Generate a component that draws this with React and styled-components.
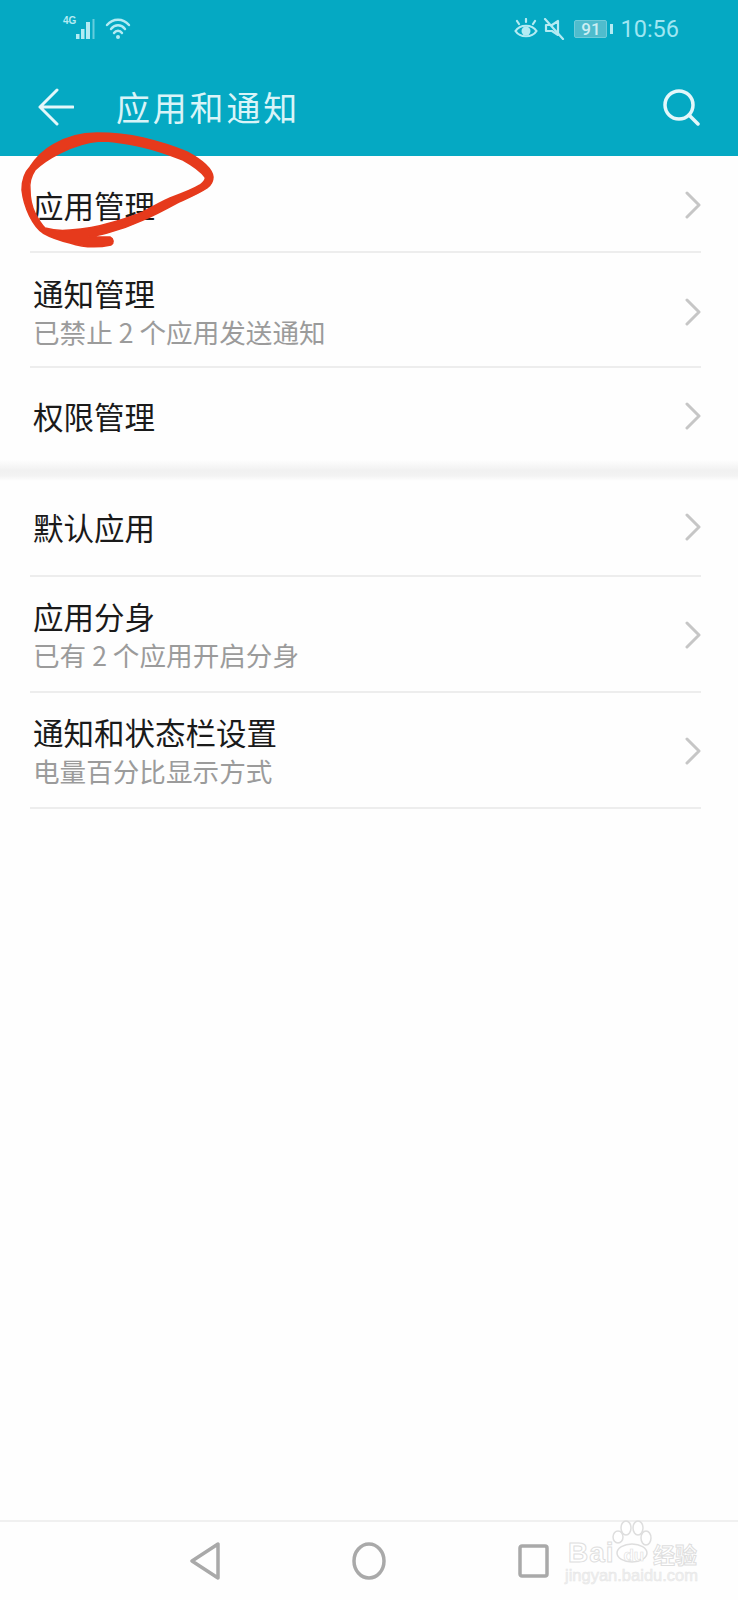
import styled, { createGlobalStyle } from 'styled-components';

const GlobalStyle = createGlobalStyle`
  html, body {
    margin: 0;
    padding: 0;
    background: #fefefe;
  }
`;

const Page = styled.div`
  position: relative;
  display: flex;
  flex-direction: column;
  width: 738px;
  height: 1600px;
  overflow: hidden;
  background: #fefefe;
  font-family: "Noto Sans CJK SC", "Noto Sans", sans-serif;
`;

const Header = styled.header`
  display: flex;
  flex-direction: column;
  background: #05a9c3;
`;

const StatusBar = styled.div`
  display: flex;
  align-items: center;
  justify-content: space-between;
  height: 58px;
  padding: 0 59px 0 63px;
  color: #b4ebf3;
`;

const StatusGroup = styled.div`
  display: flex;
  align-items: center;
`;

const NetworkLabel = styled.span`
  align-self: flex-start;
  margin-top: -2px;
  font-family: "Liberation Sans", sans-serif;
  font-size: 10px;
  font-weight: 700;
  line-height: 10px;
  width: 13px;
`;

const Battery = styled.div`
  display: flex;
  align-items: center;
  justify-content: center;
  width: 33px;
  height: 18px;
  margin-left: 9px;
  box-sizing: border-box;
  border: 1px solid #6fcbd9;
  border-radius: 2px;
  background: #4fbccd;
  color: #cdeef3;
  font-family: "Roboto", sans-serif;
  font-size: 17px;
  font-weight: 500;
  line-height: 16px;
`;

const BatteryTip = styled.div`
  width: 3px;
  height: 10px;
  margin: 0 7px 0 3px;
  background: #b4ebf3;
`;

const Clock = styled.span`
  color: #9fe6f2;
  font-family: "Roboto", sans-serif;
  font-size: 23.5px;
  line-height: 28px;
`;

const Toolbar = styled.div`
  display: flex;
  align-items: center;
  height: 98px;
  padding: 0 38px;
  color: #e4f7fa;
`;

const ToolbarTitle = styled.h1`
  flex: 1;
  margin: 0 0 0 42px;
  color: #d9f4f8;
  font-size: 34px;
  font-weight: 400;
  letter-spacing: 2.8px;
  line-height: 44px;
`;

const List = styled.div`
  display: flex;
  flex-direction: column;
`;

const Row = styled.div`
  display: flex;
  align-items: center;
  justify-content: space-between;
  box-sizing: border-box;
  height: ${(props) => props.$height}px;
  margin: 0 37px 0 30px;
  padding: ${(props) => Math.max(props.$shift, 0)}px 0 ${(props) => Math.max(-props.$shift, 0)}px 3px;
  border-bottom: ${(props) => (props.$plain ? 'none' : '2px solid #ededed')};
`;

const RowText = styled.div`
  display: flex;
  flex-direction: column;
`;

const RowTitle = styled.div`
  color: #1a1a1a;
  font-size: 30.5px;
  line-height: 40px;
`;

const RowSubtitle = styled.div`
  color: #9b9b9b;
  font-size: 26.6px;
  line-height: 38px;
`;

const Chevron = styled.svg`
  flex: none;
  width: 16px;
  height: 28px;
  color: #c6c6c6;
`;

const SectionGap = styled.div`
  height: 21px;
  background: linear-gradient(to bottom, #fefefe 0%, #f1f1f1 50%, #f3f3f3 75%, #fefefe 100%);
`;

const NavBar = styled.nav`
  display: flex;
  align-items: center;
  gap: 132px;
  box-sizing: border-box;
  height: 80px;
  margin-top: auto;
  padding: 0 0 0 190px;
  border-top: 2px solid #f0f0f0;
  color: #a9a9a9;
`;

const ScribbleMark = styled.svg`
  position: absolute;
  top: 125px;
  left: 15px;
  width: 210px;
  height: 130px;
`;

const Watermark = styled.div`
  position: absolute;
  top: 1519px;
  left: 565px;
  display: flex;
  flex-direction: column;
  width: 136px;
  color: #ffffff;
  font-family: "Liberation Sans", sans-serif;
`;

const WatermarkPaw = styled.svg`
  width: 50px;
  height: 44px;
  margin-left: 46px;
`;

const WatermarkBrand = styled.div`
  position: absolute;
  top: 22px;
  left: 3px;
  display: flex;
  align-items: center;
  justify-content: space-between;
  width: 129px;
  height: 24px;
  -webkit-text-stroke: 1px #dedede;
`;

const WatermarkLatin = styled.span`
  font-size: 28px;
  font-weight: 700;
  letter-spacing: 1px;
  line-height: 24px;
`;

const WatermarkDu = styled.span`
  margin-top: 6px;
  font-size: 17px;
  font-weight: 700;
  line-height: 18px;
  -webkit-text-stroke: 0.6px #dedede;
`;

const WatermarkCjk = styled.span`
  font-family: "Noto Sans CJK SC", sans-serif;
  font-size: 22px;
  font-weight: 700;
  line-height: 24px;
`;

const WatermarkUrl = styled.div`
  margin-top: 2px;
  color: #f0f0f0;
  font-size: 16.5px;
  line-height: 20px;
  white-space: nowrap;
  -webkit-text-stroke: 0.5px #e6e6e6;
`;

const rows = [
  { title: '应用管理', height: 97, shift: 2 },
  { title: '通知管理', subtitle: '已禁止 2 个应用发送通知', height: 115, shift: 4 },
  { title: '权限管理', height: 92, shift: 4, plain: true },
];

const moreRows = [
  { title: '默认应用', height: 96, shift: -2 },
  { title: '应用分身', subtitle: '已有 2 个应用开启分身', height: 116, shift: 2 },
  { title: '通知和状态栏设置', subtitle: '电量百分比显示方式', height: 116, shift: 2 },
];

const SettingRow = ({ title, subtitle, height, shift, plain }) => (
  <Row $height={height} $shift={shift} $plain={plain}>
    <RowText>
      <RowTitle>{title}</RowTitle>
      {subtitle && <RowSubtitle>{subtitle}</RowSubtitle>}
    </RowText>
    <Chevron viewBox="0 0 16 28" fill="none" stroke="currentColor" strokeWidth="3" strokeLinecap="round" strokeLinejoin="round">
      <path d="M2 2 L14 14 L2 26" />
    </Chevron>
  </Row>
);

const App = () => (
  <Page>
    <GlobalStyle />
    <Header>
      <StatusBar>
        <StatusGroup>
          <NetworkLabel>4G</NetworkLabel>
          <svg width="21" height="22" viewBox="0 0 21 22" fill="currentColor">
            <rect x="0" y="16" width="3.5" height="5" />
            <rect x="5" y="11" width="3.5" height="10" />
            <rect x="10" y="4" width="4" height="17" />
            <rect x="16.5" y="1" width="2" height="20" opacity="0.55" />
          </svg>
          <svg width="26" height="22" viewBox="0 0 26 22" fill="none" stroke="currentColor" strokeWidth="2.4" strokeLinecap="round" style={{ marginLeft: 8 }}>
            <path d="M2 7 C8 0 18 0 24 7" />
            <path d="M6 11 C10 6 16 6 20 11" />
            <path d="M9 15 C11 12 15 12 17 15" />
            <circle cx="13" cy="19" r="2" fill="currentColor" stroke="none" />
          </svg>
        </StatusGroup>
        <StatusGroup>
          <svg width="24" height="22" viewBox="0 0 24 22" fill="none" stroke="currentColor" strokeWidth="2.2" strokeLinecap="round">
            <path d="M1.5 13 C6 6 18 6 22.5 13 C18 20 6 20 1.5 13 Z" />
            <circle cx="12" cy="13" r="4.5" fill="currentColor" stroke="none" />
            <path d="M5 6 L3 3 M12 4 L12 1 M19 6 L21 3" />
          </svg>
          <svg width="22" height="22" viewBox="0 0 22 22" fill="none" stroke="currentColor" strokeWidth="2.2" strokeLinecap="round" strokeLinejoin="round" style={{ marginLeft: 5 }}>
            <path d="M15 3 L15 17 L9 13 L3 13 L3 7 L9 7 Z" />
            <path d="M2 1 L20 21" />
          </svg>
          <Battery>91</Battery>
          <BatteryTip />
          <Clock>10:56</Clock>
        </StatusGroup>
      </StatusBar>
      <Toolbar>
        <svg width="36" height="38" viewBox="0 0 36 38" fill="none" stroke="currentColor" strokeWidth="3" strokeLinecap="round" strokeLinejoin="round">
          <path d="M35 19 L2 19 M19 2 L2 19 L19 36" />
        </svg>
        <ToolbarTitle>应用和通知</ToolbarTitle>
        <svg width="37" height="37" viewBox="0 0 37 37" fill="none" stroke="currentColor" strokeWidth="3.5" strokeLinecap="round">
          <circle cx="16" cy="16" r="14" />
          <path d="M26 26 L35 35" />
        </svg>
      </Toolbar>
    </Header>
    <List>
      {rows.map((row) => (
        <SettingRow key={row.title} {...row} />
      ))}
    </List>
    <SectionGap />
    <List>
      {moreRows.map((row) => (
        <SettingRow key={row.title} {...row} />
      ))}
    </List>
    <NavBar>
      <svg width="30" height="38" viewBox="0 0 30 38" fill="none" stroke="currentColor" strokeWidth="3.5" strokeLinejoin="round">
        <path d="M28 2 L28 36 L2 19 Z" />
      </svg>
      <svg width="34" height="38" viewBox="0 0 34 38" fill="none" stroke="currentColor" strokeWidth="3.5">
        <ellipse cx="17" cy="19" rx="15" ry="17" />
      </svg>
      <svg width="31" height="34" viewBox="0 0 31 34" fill="none" stroke="currentColor" strokeWidth="3.5" strokeLinejoin="round">
        <rect x="2" y="2" width="27" height="30" rx="2" />
      </svg>
    </NavBar>
    <ScribbleMark viewBox="15 125 210 130">
      <path
        fill="#e63a1c"
        stroke="#e63a1c"
        strokeWidth="1.5"
        fillRule="evenodd"
        d="M110 237 C114 239 114 243 111 245 C97 248 82 247 70 243 C58 240 50 237 43 233 C33 226 24 208 22 190 C22 178 26 171 30 167 C36 158 44 150 53 145 C66 137 82 133 97 133 C115 133 130 135 143 138 C160 142 175 147 187 152 C200 159 212 168 213 177 C213 182 211 185 207 188 C198 194 188 198 177 203 C166 209 155 215 143 220 C130 226 118 230 107 233 C100 235 94 236 88 237 Z M45 228 C52 230 61 231 70 230 C84 229 97 227 110 223 C122 220 133 216 143 212 C152 207 161 202 170 198 C181 194 192 190 200 185 C204 182 206 179 205 177 C200 170 192 165 183 160 C170 155 156 150 143 147 C129 144 115 141 100 141 C86 142 72 147 60 153 C50 158 41 164 35 170 C31 176 29 182 30 190 C30 199 32 207 35 213 C38 219 41 224 45 228 Z"
      />
    </ScribbleMark>
    <Watermark>
      <WatermarkPaw viewBox="0 0 50 44" fill="#ffffff" stroke="#dedede" strokeWidth="1.5">
        <ellipse cx="15" cy="9" rx="5" ry="7" />
        <ellipse cx="27" cy="9" rx="5" ry="7" />
        <ellipse cx="7" cy="18" rx="5" ry="6" />
        <ellipse cx="35" cy="19" rx="5" ry="7" />
        <ellipse cx="21" cy="34" rx="15" ry="9" />
      </WatermarkPaw>
      <WatermarkBrand>
        <WatermarkLatin>Bai</WatermarkLatin>
        <WatermarkDu>du</WatermarkDu>
        <WatermarkCjk>经验</WatermarkCjk>
      </WatermarkBrand>
      <WatermarkUrl>jingyan.baidu.com</WatermarkUrl>
    </Watermark>
  </Page>
);

export default App;
